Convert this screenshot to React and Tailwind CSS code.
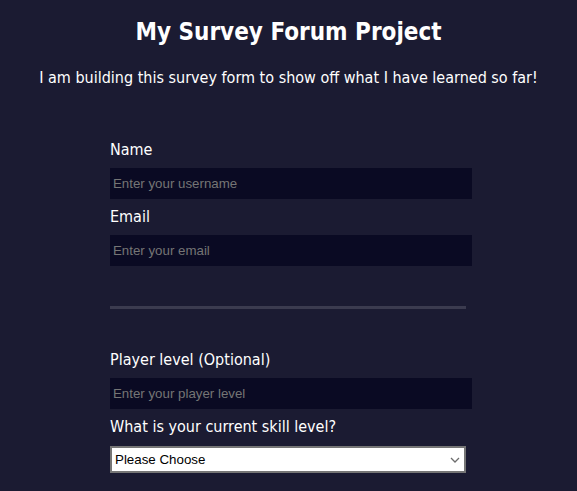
import React from "react";

function Field({ label, placeholder, type = "text" }) {
  return (
    <div className="flex flex-col">
      <label className="text-[16px] leading-[24px] text-white">{label}</label>
      <input
        type={type}
        placeholder={placeholder}
        className="mt-[6px] h-[31px] w-[362px] bg-[#0a0a23] px-[3px] text-[13.3px] text-white placeholder:text-[#757575] outline-none"
        style={{ fontFamily: '"Liberation Sans", Arial, sans-serif' }}
      />
    </div>
  );
}

export default function App() {
  return (
    <div
      className="min-h-screen bg-[#1b1b32] text-white"
      style={{ fontFamily: '"DejaVu Sans Condensed", Tahoma, "DejaVu Sans", sans-serif' }}
    >
      <h1 className="pt-[14px] text-center text-[24px] font-bold leading-[36px]">
        My Survey Forum Project
      </h1>
      <p className="mt-[16px] text-center text-[16px] leading-[24px]">
        I am building this survey form to show off what I have learned so far!
      </p>

      <form className="ml-[110px] mt-[48px] w-[362px]">
        <Field label="Name" placeholder="Enter your username" />
        <div className="mt-[6px]">
          <Field label="Email" placeholder="Enter your email" type="email" />
        </div>

        <hr className="mt-[40px] h-[3px] w-[356px] border-0 bg-[#3b3b4f]" />

        <div className="mt-[39px]">
          <Field label="Player level (Optional)" placeholder="Enter your player level" />
        </div>

        <div className="mt-[6px] flex flex-col">
          <label className="text-[16px] leading-[24px]">What is your current skill level?</label>
          <div className="relative mt-[7px] w-[356px]">
            <select
              className="h-[27px] w-full appearance-none border-2 border-[#767676] bg-white px-[3px] text-[13.33px] text-black outline-none"
              style={{ fontFamily: '"Liberation Sans", Arial, sans-serif' }}
              defaultValue=""
            >
              <option value="">Please Choose</option>
              <option>Beginner</option>
              <option>Intermediate</option>
              <option>Advanced</option>
            </select>
            <svg
              className="pointer-events-none absolute right-[6px] top-[11px]"
              width="10"
              height="6"
              viewBox="0 0 10 6"
              fill="none"
            >
              <path d="M1 1l4 4 4-4" stroke="#6d6d6d" strokeWidth="1.3" />
            </svg>
          </div>
        </div>
      </form>
    </div>
  );
}
